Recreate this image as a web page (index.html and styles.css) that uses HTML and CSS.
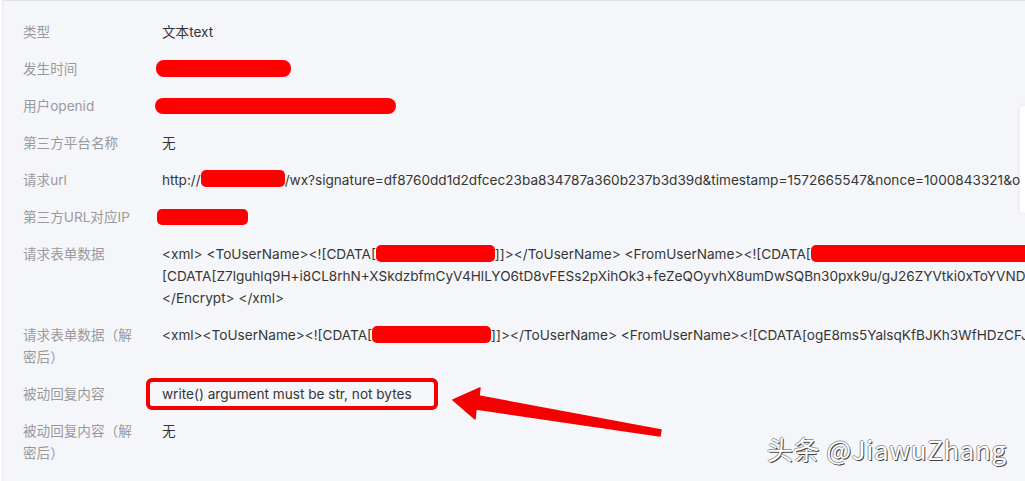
FILE: index.html
```html
<!DOCTYPE html>
<html lang="zh-CN">
<head>
    <meta charset="UTF-8">
    <meta name="viewport" content="width=device-width, initial-scale=1.0">
    <title>消息详情</title>
    <link rel="stylesheet" href="styles.css">
</head>
<body>
    <div class="panel">
        <div class="row">
            <div class="label">类型</div>
            <div class="value">文本text</div>
        </div>
        <div class="row">
            <div class="label">发生时间</div>
            <div class="value"><span class="mask mask-time"></span></div>
        </div>
        <div class="row">
            <div class="label">用户openid</div>
            <div class="value"><span class="mask mask-openid"></span></div>
        </div>
        <div class="row">
            <div class="label">第三方平台名称</div>
            <div class="value">无</div>
        </div>
        <div class="row">
            <div class="label">请求url</div>
            <div class="value">http://<span class="mask mask-host"></span>/wx?signature=df8760dd1d2dfcec23ba834787a360b237b3d39d&amp;timestamp=1572665547&amp;nonce=1000843321&amp;openid=oEeRfw</div>
        </div>
        <div class="row">
            <div class="label">第三方URL对应IP</div>
            <div class="value"><span class="mask mask-ip"></span></div>
        </div>
        <div class="row">
            <div class="label">请求表单数据</div>
            <div class="value">
                <div>&lt;xml&gt; &lt;ToUserName&gt;&lt;![CDATA[<span class="mask mask-cdata"></span>]]&gt;&lt;/ToUserName&gt; &lt;FromUserName&gt;&lt;![CDATA[<span class="mask mask-long"></span></div>
                <div>[CDATA[Z7lguhlq9H+i8CL8rhN+XSkdzbfmCyV4HlLYO6tD8vFESs2pXihOk3+feZeQOyvhX8umDwSQBn30pxk9u/gJ26ZYVtki0xToYVND8c</div>
                <div>&lt;/Encrypt&gt; &lt;/xml&gt;</div>
            </div>
        </div>
        <div class="row">
            <div class="label">请求表单数据（解密后）</div>
            <div class="value">&lt;xml&gt;&lt;ToUserName&gt;&lt;![CDATA[<span class="mask mask-cdata"></span>]]&gt;&lt;/ToUserName&gt; &lt;FromUserName&gt;&lt;![CDATA[ogE8ms5YalsqKfBJKh3WfHDzCFJs]]&gt;&lt;/FromUserName&gt;</div>
        </div>
        <div class="row">
            <div class="label">被动回复内容</div>
            <div class="value"><span class="highlight">write() argument must be str, not bytes</span></div>
        </div>
        <div class="row">
            <div class="label">被动回复内容（解密后）</div>
            <div class="value">无</div>
        </div>
    </div>

    <!-- annotation arrow -->
    <svg class="arrow" width="230" height="60" viewBox="0 0 230 60">
        <polygon points="13,20 40,8 39,16 221,50 220,56 36,29 35,39" fill="#f40000" stroke="#f40000" stroke-width="1.5" stroke-linejoin="round"/>
    </svg>

    <div class="side-card"></div>
    <div class="watermark">头条 @JiawuZhang</div>
</body>
</html>
```

FILE: styles.css
```css
html, body {
    margin: 0;
    height: 100%;
    overflow: hidden;
}
body {
    background-color: #fff;
    font-family: Inter, "Noto Sans CJK SC", sans-serif;
    font-size: 13.6px;
    color: #333;
}
.panel {
    margin-left: 2px;
    height: 100%;
    box-sizing: border-box;
    background-color: #f5f6f9;
    border-top: 1px solid #e3e4e8;
    border-left: 1px solid #eaebef;
    padding: 20px 0 0 20px;
}
.row {
    display: flex;
    line-height: 22px;
    margin-bottom: 15px;
}
.label {
    width: 118px;
    flex-shrink: 0;
    margin-right: 21px;
    color: #9a9a9e;
}
.value {
    white-space: nowrap;
    color: #353535;
}
.mask {
    display: inline-block;
    height: 17px;
    background-color: #fe0000;
    border-radius: 8px;
    vertical-align: -3px;
}
.mask-time {
    width: 135px;
    margin-left: -6px;
}
.mask-openid {
    width: 241px;
    height: 16px;
    margin-left: -7px;
}
.mask-host {
    width: 84px;
    border-radius: 5px;
    vertical-align: -2px;
}
.mask-ip {
    width: 91px;
    height: 16px;
    margin-left: -5px;
    border-radius: 5px;
}
.mask-cdata {
    width: 119px;
    border-radius: 5px;
}
.mask-long {
    width: 260px;
    border-radius: 5px;
}
.highlight {
    display: inline-block;
    border: 4px solid #f00000;
    border-radius: 6px;
    padding: 1px 22px 1px 12px;
    margin: -5px 0 -5px -16px;
}
.arrow {
    position: absolute;
    left: 440px;
    top: 380px;
}
.side-card {
    position: absolute;
    left: 1020px;
    top: 106px;
    width: 20px;
    height: 107px;
    background-color: #fff;
    border-radius: 4px;
    box-shadow: 0 0 4px rgba(0, 0, 0, 0.08);
}
.watermark {
    position: absolute;
    left: 767px;
    top: 434px;
    font-family: "Noto Sans CJK SC", "Liberation Sans", sans-serif;
    font-size: 26px;
    line-height: 30px;
    letter-spacing: 0.6px;
    color: #fff;
    text-shadow: 1px 1px 0 #444, -1px 0 0 #999, 0 -1px 0 #999;
    white-space: nowrap;
}
```
